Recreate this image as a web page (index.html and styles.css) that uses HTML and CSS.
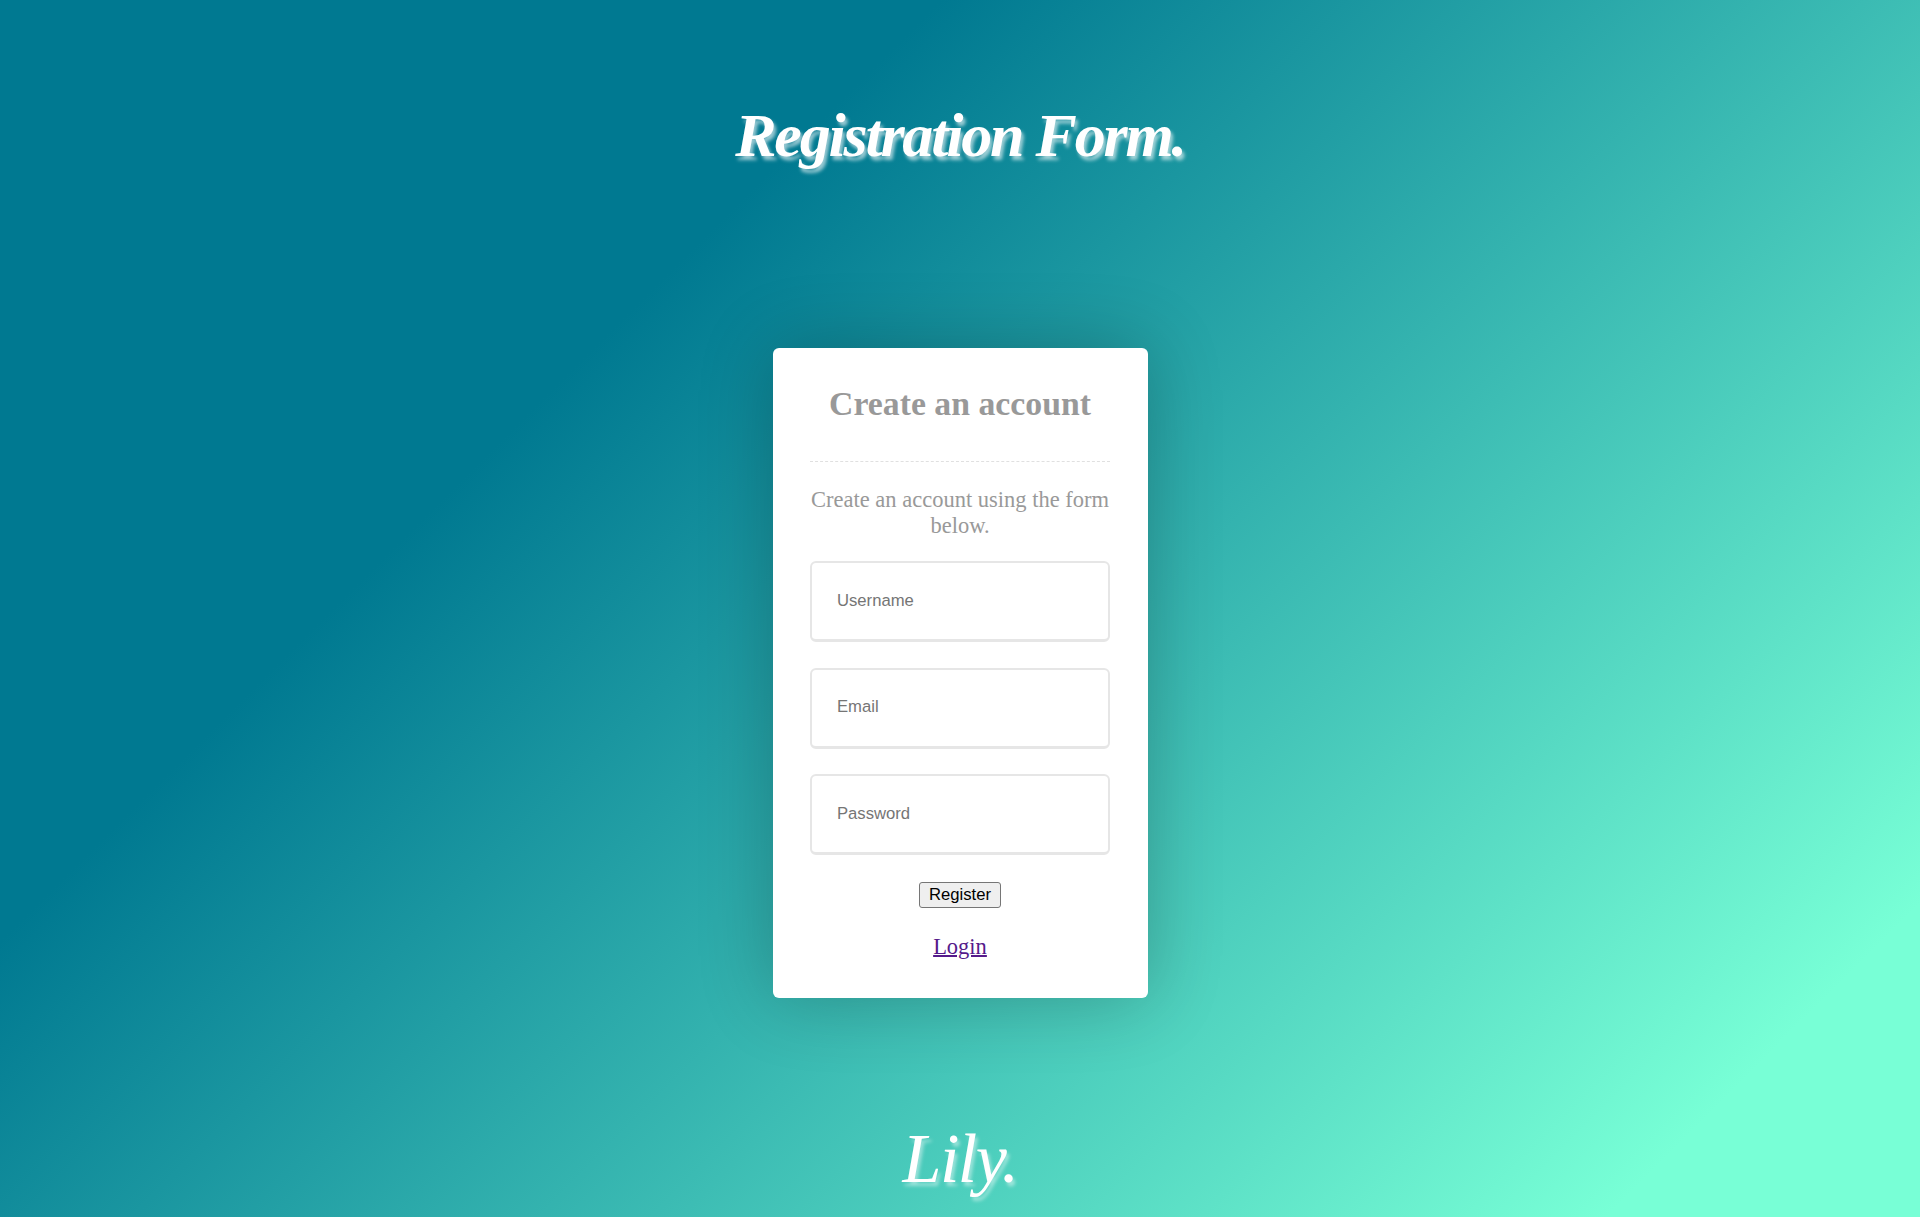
FILE: index.html
```html
<!DOCTYPE html>
<html lang="en">
<head>
<meta charset="utf-8">
<title>Registration Form</title>
<link rel="stylesheet" href="styles.css">
</head>
<body>
<header class="page-header"><h1 class="script-title">Registration Form.</h1></header>
<main class="card">
  <h2 class="card-title">Create an account</h2>
  <p class="intro">Create an account using the form below.</p>
  <form class="form">
    <input class="field" type="text" placeholder="Username">
    <input class="field" type="text" placeholder="Email">
    <input class="field" type="password" placeholder="Password">
    <button class="submit" type="button">Register</button>
  </form>
  <a class="login" href="#">Login</a>
</main>
<footer class="signature">Lily.</footer>
</body>
</html>
```
FILE: styles.css
```css
* { box-sizing: border-box; }
html { height: 100%; }
body {
  margin: 0;
  height: 1217px;
  overflow: hidden;
  display: flex;
  flex-direction: column;
  align-items: center;
  background: linear-gradient(135deg, #007991 30%, #78ffd6 90%);
  font-family: "Liberation Serif", "Times New Roman", serif;
  font-size: 22.5px;
  color: #999;
}
.page-header { height: 348px; flex: none; padding-top: 98px; }
.script-title {
  margin: 0;
  font-size: 62px;
  line-height: 74px;
  font-style: italic;
  font-weight: 700;
  letter-spacing: -2.2px;
  color: #fff;
  white-space: nowrap;
  text-shadow: 2.5px 3.75px 3.75px rgba(255, 255, 255, .6);
}
.card {
  width: 375px;
  height: 650px;
  flex: none;
  padding: 37px 37.5px;
  display: flex;
  flex-direction: column;
  background: #fff;
  border-radius: 6px;
  box-shadow: 0 0 75px rgba(0, 0, 0, .24);
  text-align: center;
}
.card-title {
  margin: 0;
  padding-bottom: 38px;
  border-bottom: 1px dashed #e0e0e0;
  font-size: 33.75px;
  line-height: 38px;
}
.intro { margin: 25px -2px 22px; line-height: 26px; }
.form { display: flex; flex-direction: column; align-items: center; }
.field {
  width: 300px;
  height: 81px;
  margin: 0 0 25.5px;
  padding: 0 25px 1px;
  border: 2px solid #e6e6e6;
  border-bottom-width: 3px;
  border-radius: 6px;
  font: 16.67px "Liberation Sans", Arial, sans-serif;
}
.field::placeholder { color: #757575; }
.submit {
  width: 82px;
  height: 26px;
  margin: 1.5px 0 0;
  padding: 0;
  border: 1px solid #767676;
  border-radius: 3px;
  background: #efefef;
  color: #000;
  font: 16.67px/22px "Liberation Sans", Arial, sans-serif;
}
.login {
  margin-top: 26px;
  line-height: 26px;
  color: #551a8b;
  text-decoration-thickness: 2px;
}
.signature {
  margin-top: 121px;
  font-size: 70px;
  line-height: 80px;
  font-style: italic;
  color: #fff;
  letter-spacing: -1.5px;
  text-shadow: 2.5px 3.75px 3.75px rgba(255, 255, 255, .45);
}
```
